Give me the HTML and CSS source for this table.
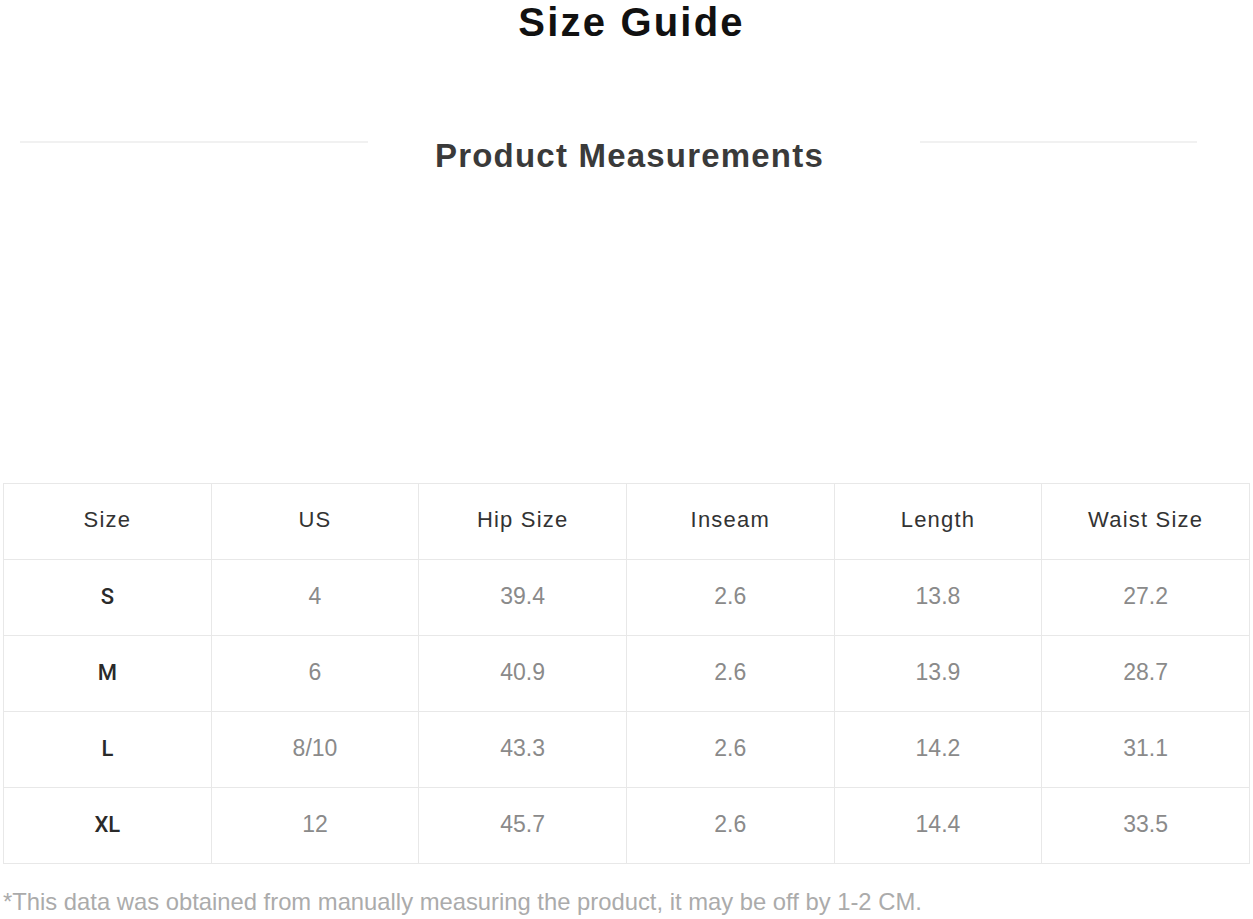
FILE: index.html
```html
<!DOCTYPE html>
<html lang="en">
<head>
<meta charset="utf-8">
<title>Size Guide</title>
<link rel="stylesheet" href="styles.css">
</head>
<body>
<main class="page">
  <h1 class="title">Size Guide</h1>
  <div class="section-head">
    <span class="rule rule-left"></span>
    <h2 class="subtitle">Product Measurements</h2>
    <span class="rule rule-right"></span>
  </div>
  <table class="sizes">
    <thead>
      <tr><th>Size</th><th>US</th><th>Hip Size</th><th>Inseam</th><th>Length</th><th>Waist Size</th></tr>
    </thead>
    <tbody>
      <tr><td class="sz">S</td><td>4</td><td>39.4</td><td>2.6</td><td>13.8</td><td>27.2</td></tr>
      <tr><td class="sz">M</td><td>6</td><td>40.9</td><td>2.6</td><td>13.9</td><td>28.7</td></tr>
      <tr><td class="sz">L</td><td>8/10</td><td>43.3</td><td>2.6</td><td>14.2</td><td>31.1</td></tr>
      <tr><td class="sz">XL</td><td>12</td><td>45.7</td><td>2.6</td><td>14.4</td><td>33.5</td></tr>
    </tbody>
  </table>
  <p class="note">*This data was obtained from manually measuring the product, it may be off by 1-2 CM.</p>
</main>
</body>
</html>
```
FILE: styles.css
```css
html, body {
  margin: 0;
  padding: 0;
  background: #ffffff;
}
body {
  font-family: "Liberation Sans", Arial, sans-serif;
  color: #333;
}
.page {
  width: 1253px;
  height: 919px;
  overflow: hidden;
}
.title {
  margin: 0;
  height: 44px;
  line-height: 44px;
  font-size: 40px;
  font-weight: bold;
  letter-spacing: 2.2px;
  color: #111;
  text-align: center;
  padding-left: 10px;
}
.section-head {
  display: flex;
  align-items: flex-start;
  margin-top: 92px;
  padding-left: 20px;
  height: 40px;
}
.rule {
  display: block;
  height: 2px;
  margin-top: 5px;
  background: #f1f1f1;
  flex: 0 0 auto;
}
.rule-left { width: 348px; }
.rule-right { width: 277px; }
.subtitle {
  margin: 0 0 0 67px;
  width: 485px;
  font-size: 33px;
  line-height: 40px;
  font-weight: bold;
  letter-spacing: 1.2px;
  color: #3a3a3a;
  white-space: nowrap;
  flex: 0 0 auto;
}
.sizes {
  margin: 307px 0 0 3px;
  border-collapse: collapse;
  table-layout: fixed;
  width: 1247px;
}
.sizes th, .sizes td {
  padding: 0;
  border: 1px solid #e8e8e8;
  text-align: center;
  vertical-align: middle;
}
.sizes th {
  height: 71px;
  padding-bottom: 4px;
  font-size: 22px;
  font-weight: normal;
  letter-spacing: 1.2px;
  color: #333;
}
.sizes td {
  height: 72px;
  padding-bottom: 3px;
  font-size: 23px;
  color: #8a8a8a;
}
.sizes td.sz {
  font-family: Roboto, "Liberation Sans", sans-serif;
  font-weight: 500;
  font-size: 22px;
  color: #2a2a2a;
}
.note {
  margin: 24px 0 0 3px;
  font-size: 23.8px;
  line-height: 28px;
  color: #ababab;
  white-space: nowrap;
}
```
